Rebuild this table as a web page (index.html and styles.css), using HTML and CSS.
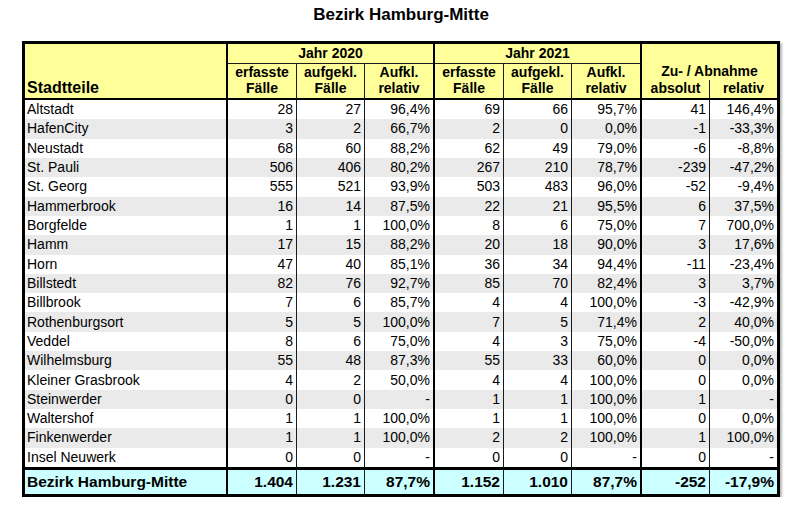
FILE: index.html
```html
<!DOCTYPE html>
<html lang="de">
<head>
<meta charset="utf-8">
<title>Bezirk Hamburg-Mitte</title>
<link rel="stylesheet" href="styles.css">
</head>
<body>
<div class="page">
  <h1 class="title">Bezirk Hamburg-Mitte</h1>
  <table class="stats">
    <colgroup>
      <col class="c-name"><col class="c-n1"><col class="c-n2"><col class="c-n3"><col class="c-n1"><col class="c-n2"><col class="c-n3"><col class="c-n2"><col class="c-last">
    </colgroup>
    <thead>
      <tr class="h1">
        <th class="h-name" rowspan="3">Stadtteile</th>
        <th class="h-year" colspan="3">Jahr 2020</th>
        <th class="h-year" colspan="3">Jahr 2021</th>
        <th class="h-diff" colspan="2" rowspan="2">Zu- / Abnahme</th>
      </tr>
      <tr class="h2">
        <th class="h-sub thin" rowspan="2">erfasste<br>Fälle</th>
        <th class="h-sub thin" rowspan="2">aufgekl.<br>Fälle</th>
        <th class="h-sub thick" rowspan="2">Aufkl.<br>relativ</th>
        <th class="h-sub thin" rowspan="2">erfasste<br>Fälle</th>
        <th class="h-sub thin" rowspan="2">aufgekl.<br>Fälle</th>
        <th class="h-sub thick" rowspan="2">Aufkl.<br>relativ</th>
      </tr>
      <tr class="h3">
        <th class="h-low thin">absolut</th>
        <th class="h-low">relativ</th>
      </tr>
    </thead>
    <tbody>
      <tr><td>Altstadt</td><td>28</td><td>27</td><td>96,4%</td><td>69</td><td>66</td><td>95,7%</td><td>41</td><td>146,4%</td></tr>
      <tr><td>HafenCity</td><td>3</td><td>2</td><td>66,7%</td><td>2</td><td>0</td><td>0,0%</td><td>-1</td><td>-33,3%</td></tr>
      <tr><td>Neustadt</td><td>68</td><td>60</td><td>88,2%</td><td>62</td><td>49</td><td>79,0%</td><td>-6</td><td>-8,8%</td></tr>
      <tr><td>St. Pauli</td><td>506</td><td>406</td><td>80,2%</td><td>267</td><td>210</td><td>78,7%</td><td>-239</td><td>-47,2%</td></tr>
      <tr><td>St. Georg</td><td>555</td><td>521</td><td>93,9%</td><td>503</td><td>483</td><td>96,0%</td><td>-52</td><td>-9,4%</td></tr>
      <tr><td>Hammerbrook</td><td>16</td><td>14</td><td>87,5%</td><td>22</td><td>21</td><td>95,5%</td><td>6</td><td>37,5%</td></tr>
      <tr><td>Borgfelde</td><td>1</td><td>1</td><td>100,0%</td><td>8</td><td>6</td><td>75,0%</td><td>7</td><td>700,0%</td></tr>
      <tr><td>Hamm</td><td>17</td><td>15</td><td>88,2%</td><td>20</td><td>18</td><td>90,0%</td><td>3</td><td>17,6%</td></tr>
      <tr><td>Horn</td><td>47</td><td>40</td><td>85,1%</td><td>36</td><td>34</td><td>94,4%</td><td>-11</td><td>-23,4%</td></tr>
      <tr><td>Billstedt</td><td>82</td><td>76</td><td>92,7%</td><td>85</td><td>70</td><td>82,4%</td><td>3</td><td>3,7%</td></tr>
      <tr><td>Billbrook</td><td>7</td><td>6</td><td>85,7%</td><td>4</td><td>4</td><td>100,0%</td><td>-3</td><td>-42,9%</td></tr>
      <tr><td>Rothenburgsort</td><td>5</td><td>5</td><td>100,0%</td><td>7</td><td>5</td><td>71,4%</td><td>2</td><td>40,0%</td></tr>
      <tr><td>Veddel</td><td>8</td><td>6</td><td>75,0%</td><td>4</td><td>3</td><td>75,0%</td><td>-4</td><td>-50,0%</td></tr>
      <tr><td>Wilhelmsburg</td><td>55</td><td>48</td><td>87,3%</td><td>55</td><td>33</td><td>60,0%</td><td>0</td><td>0,0%</td></tr>
      <tr><td>Kleiner Grasbrook</td><td>4</td><td>2</td><td>50,0%</td><td>4</td><td>4</td><td>100,0%</td><td>0</td><td>0,0%</td></tr>
      <tr><td>Steinwerder</td><td>0</td><td>0</td><td>-</td><td>1</td><td>1</td><td>100,0%</td><td>1</td><td>-</td></tr>
      <tr><td>Waltershof</td><td>1</td><td>1</td><td>100,0%</td><td>1</td><td>1</td><td>100,0%</td><td>0</td><td>0,0%</td></tr>
      <tr><td>Finkenwerder</td><td>1</td><td>1</td><td>100,0%</td><td>2</td><td>2</td><td>100,0%</td><td>1</td><td>100,0%</td></tr>
      <tr><td>Insel Neuwerk</td><td>0</td><td>0</td><td>-</td><td>0</td><td>0</td><td>-</td><td>0</td><td>-</td></tr>
    </tbody>
    <tfoot>
      <tr class="total"><td>Bezirk Hamburg-Mitte</td><td>1.404</td><td>1.231</td><td>87,7%</td><td>1.152</td><td>1.010</td><td>87,7%</td><td>-252</td><td>-17,9%</td></tr>
    </tfoot>
  </table>
</div>
</body>
</html>
```
FILE: styles.css
```css
html, body {
  margin: 0;
  padding: 0;
  background: #fff;
}

body {
  font-family: "Liberation Sans", Arial, Helvetica, sans-serif;
  color: #000;
}

.page {
  padding: 5px 20px 0 22px;
}

.title {
  margin: 0 0 16px 0;
  font-size: 17px;
  line-height: 20px;
  font-weight: bold;
  text-align: center;
}

.stats {
  box-sizing: border-box;
  width: 758px;
  table-layout: fixed;
  border-collapse: separate;
  border-spacing: 0;
  border: 3px solid #000;
  box-shadow: 2px 2px 2px rgba(0, 0, 0, 0.28);
  font-size: 14px;
}

.c-name { width: 203px; }
.c-n1 { width: 69px; }
.c-n2 { width: 68px; }
.c-n3 { width: 70px; }
.c-last { width: 67px; }

.stats th,
.stats td {
  padding: 0;
  white-space: nowrap;
  overflow: hidden;
}

/* header */
.stats thead th {
  background: #ffff99;
  font-weight: bold;
  line-height: 16px;
}

.h1 { height: 20px; }
.h2 { height: 16px; }
.h3 { height: 19px; }

.stats thead th.h-name {
  font-size: 16px;
  line-height: 18px;
  text-align: left;
  vertical-align: bottom;
  padding: 0 0 1px 2px;
  border-right: 2px solid #000;
  border-bottom: 2px solid #000;
}

.stats thead th.h-year {
  text-align: center;
  vertical-align: middle;
  line-height: 19px;
  border-right: 2px solid #000;
  border-bottom: 1px solid #1a1a1a;
}

.stats thead th.h-diff {
  text-align: center;
  vertical-align: bottom;
  padding-bottom: 1px;
}

.stats thead th.h-sub {
  text-align: center;
  vertical-align: bottom;
  padding-bottom: 2px;
  border-bottom: 2px solid #000;
}

.stats thead th.h-low {
  text-align: center;
  vertical-align: top;
  border-bottom: 2px solid #000;
}

.stats thead th.thin { border-right: 1px solid #1a1a1a; }
.stats thead th.thick { border-right: 2px solid #000; }

/* body */
.stats tbody tr {
  height: 19.32px;
}

.stats tbody tr:nth-child(even) td {
  background: #eaeaea;
}

.stats td {
  line-height: 15px;
  text-align: right;
  padding: 0 3px 0 2px;
  vertical-align: middle;
}

.stats td:first-child {
  text-align: left;
}

.stats td:nth-child(1),
.stats td:nth-child(4),
.stats td:nth-child(7) {
  border-right: 2px solid #000;
}

.stats td:nth-child(2),
.stats td:nth-child(3),
.stats td:nth-child(5),
.stats td:nth-child(6),
.stats td:nth-child(8) {
  border-right: 1px solid #1a1a1a;
}

/* total */
.total td {
  background: #ccffff;
  font-weight: bold;
  font-size: 15.5px;
  line-height: 18px;
  height: 24px;
  border-top: 3px solid #000;
}
```
